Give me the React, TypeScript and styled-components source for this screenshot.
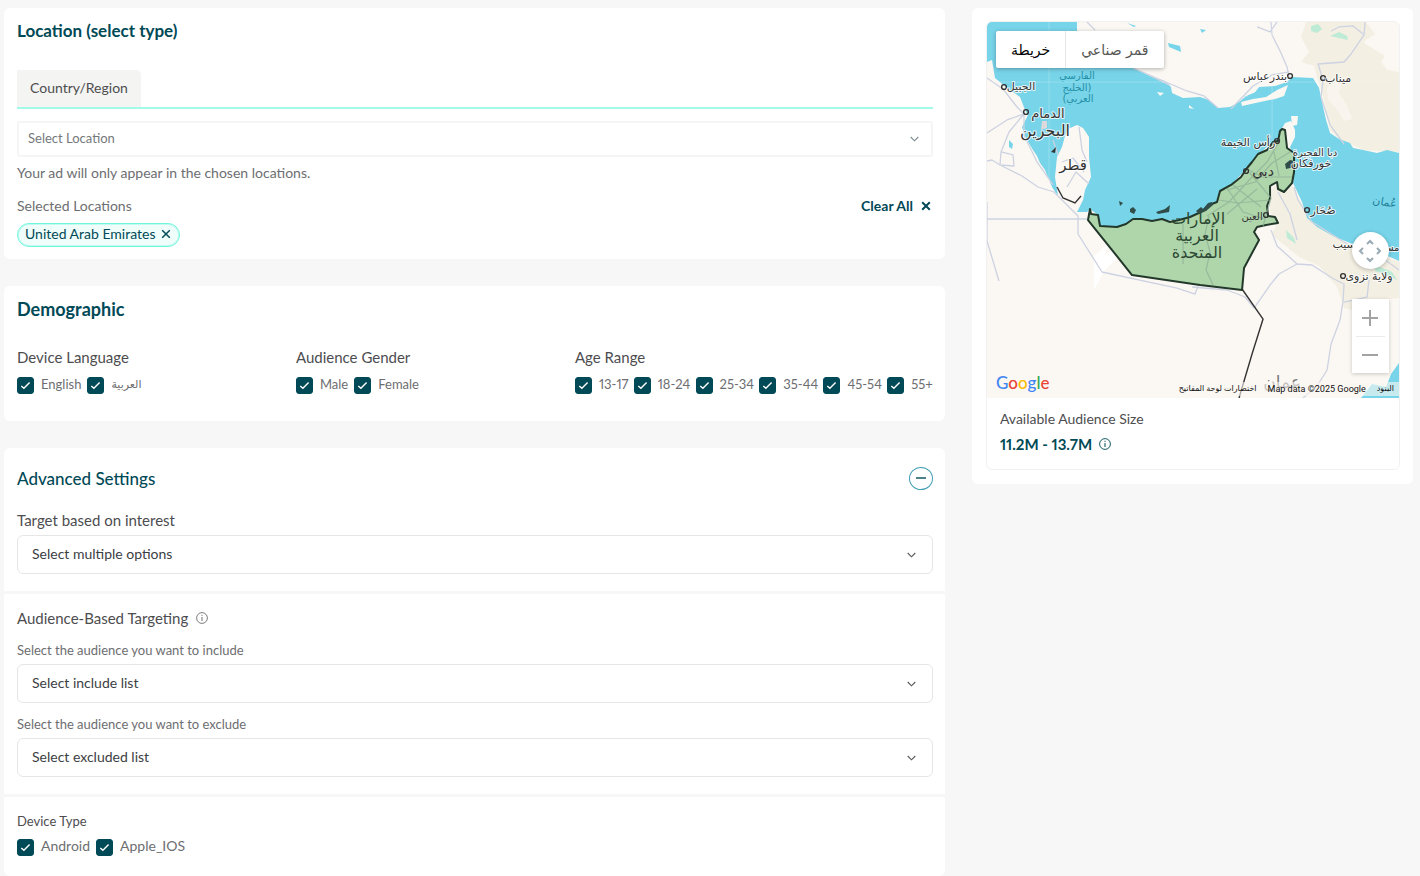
import React, { useState } from "react";
import styled, { createGlobalStyle } from "styled-components";

const GlobalStyle = createGlobalStyle`
  * { box-sizing: border-box; }
  body {
    margin: 0;
    background: #f7f7f7;
    color: #4d4d4f;
    font-family: Lato, "DejaVu Sans", sans-serif;
    font-size: 14px;
    line-height: 20px;
    font-variant-numeric: proportional-nums;
  }
  button, select { font: inherit; color: inherit; }
  h2, h3, p { margin: 0; }
`;

const teal = "#004956";

const Page = styled.div`
  display: grid;
  grid-template-columns: minmax(0, 32fr) minmax(0, 15fr);
  align-items: start;
  gap: 27px;
  padding: 8px 7px 0 4px;
`;

const Column = styled.main`
  display: flex;
  flex-direction: column;
  gap: 27px;
`;

const Card = styled.section`
  background: #fff;
  border-radius: 6px;
`;

const Section = styled.div<{ $top?: number; $bottom?: number }>`
  display: flex;
  flex-direction: column;
  padding: ${(p) => p.$top ?? 13}px 12px ${(p) => p.$bottom ?? 12}px 13px;
  & + & { border-top: 3px solid #f7f7f7; }
`;

const Title = styled.h2<{ $weight?: number; $size?: number }>`
  color: ${teal};
  font-size: ${(p) => p.$size ?? 17}px;
  line-height: 20px;
  font-weight: ${(p) => p.$weight ?? 700};
`;

const TabBar = styled.div`
  display: flex;
  margin-top: 29px;
  border-bottom: 2px solid #a2fbe9;
`;

const Tab = styled.button`
  height: 37px;
  padding: 0 13px 2px;
  border: 0;
  border-radius: 0 5px 0 0;
  background: #f4f4f2;
`;

const Field = styled.div`
  position: relative;
  display: flex;
  svg {
    position: absolute;
    right: 17px;
    top: 50%;
    transform: translateY(-50%);
    pointer-events: none;
  }
`;

const LocationField = styled.div`
  margin: 12px 0 6px;
  svg { right: 14px; }
`;

const Select = styled.select<{ $muted?: boolean }>`
  appearance: none;
  width: 100%;
  height: ${(p) => (p.$muted ? 36 : 39)}px;
  padding: 0 ${(p) => (p.$muted ? 9 : 14)}px 2px;
  border: ${(p) => (p.$muted ? "2px solid #f5f5f5" : "1px solid #e6e6e6")};
  border-radius: ${(p) => (p.$muted ? 3 : 6)}px;
  background: #fff;
  color: ${(p) => (p.$muted ? "#75787b" : "#3c4043")};
  font-size: ${(p) => (p.$muted ? 13 : 14)}px;
`;

const Note = styled.p`
  color: #6d6e71;
`;

const Row = styled.div<{ $gap?: number; $between?: boolean }>`
  display: flex;
  align-items: center;
  gap: ${(p) => p.$gap ?? 0}px;
  justify-content: ${(p) => (p.$between ? "space-between" : "flex-start")};
`;

const SelectedRow = styled(Row)`
  margin-top: 13px;
`;

const ClearButton = styled.button`
  display: flex;
  align-items: center;
  gap: 8px;
  padding: 0 2px;
  border: 0;
  background: none;
  color: ${teal};
  font-weight: 700;
`;

const Chip = styled.span`
  display: inline-flex;
  align-items: center;
  align-self: flex-start;
  gap: 6px;
  height: 24px;
  margin-top: 7px;
  padding: 0 8px 2px 7px;
  border: 1px solid #6ff5dc;
  border-radius: 12px;
  background: #effefb;
  color: ${teal};
  box-shadow: inset 0 0 0 1px #c4fbf0;
`;

const IconButton = styled.button`
  display: flex;
  padding: 0;
  border: 0;
  background: none;
`;

const Groups = styled.div`
  display: grid;
  grid-template-columns: 279fr 279fr 358fr;
  margin-top: 28px;
`;

const Fieldset = styled.fieldset`
  min-width: 0;
  margin: 0;
  padding: 0;
  border: 0;
`;

const Legend = styled.legend<{ $small?: boolean }>`
  padding: 0;
  margin-bottom: ${(p) => (p.$small ? 7 : 9)}px;
  font-size: ${(p) => (p.$small ? 13 : 15)}px;
`;

const Checks = styled.div<{ $spread?: boolean }>`
  display: flex;
  gap: ${(p) => (p.$spread ? 4 : 6)}px;
  justify-content: ${(p) => (p.$spread ? "space-between" : "flex-start")};
`;

const CheckLabel = styled.label<{ $small?: boolean }>`
  display: inline-flex;
  align-items: center;
  gap: 7px;
  height: 18px;
  color: #6d6e71;
  font-size: ${(p) => (p.$small ? 13 : 14)}px;
  white-space: nowrap;
`;

const CheckText = styled.span`
  padding-bottom: 2px;
  line-height: 16px;
  &:lang(ar) { font-size: 11px; }
`;

const CheckBox = styled.span`
  display: grid;
  width: 17px;
  height: 17px;
  input, svg { grid-area: 1 / 1; }
  input {
    appearance: none;
    width: 17px;
    height: 17px;
    margin: 0;
    border: 1px solid ${teal};
    border-radius: 3px;
  }
  input:checked { background: ${teal}; }
  svg { pointer-events: none; place-self: center; }
`;

const Toggle = styled.button`
  display: flex;
  align-items: center;
  justify-content: center;
  width: 24px;
  height: 23px;
  padding: 0 0 2px;
  border: 1px solid #3f9db2;
  border-radius: 50%;
  background: #fff;
`;

const SubTitle = styled.h3`
  font-size: 15px;
  line-height: 20px;
  font-weight: 400;
`;

const FieldLabel = styled.label<{ $top?: number; $bottom?: number }>`
  margin-top: ${(p) => p.$top ?? 0}px;
  margin-bottom: ${(p) => p.$bottom ?? 4}px;
  color: #6d6e71;
  font-size: 13px;
`;

const InterestLabel = styled(FieldLabel)`
  color: #4d4d4f;
  font-size: 15px;
`;

const Aside = styled.aside`
  padding: 13px 13px 14px 14px;
  border-radius: 6px;
  background: #fff;
`;

const MapCard = styled.div`
  overflow: hidden;
  border: 1px solid #f1f1f1;
  border-radius: 6px;
`;

const MapArea = styled.div`
  position: relative;
  height: 376px;
  background: #fbf8f3;
  > svg { display: block; width: 100%; height: 100%; }
`;

const MapTypes = styled.div`
  position: absolute;
  top: 9px;
  left: 9px;
  display: flex;
  height: 37px;
  background: #fff;
  border-radius: 2px;
  box-shadow: 0 1px 4px rgba(0, 0, 0, 0.3);
`;

const MapType = styled.button<{ $active?: boolean }>`
  padding: 0 15px;
  border: 0;
  border-right: ${(p) => (p.$active ? "1px solid #e6e6e6" : "0")};
  background: none;
  color: ${(p) => (p.$active ? "#000" : "#565656")};
  font-family: "DejaVu Sans", sans-serif;
  font-size: 14px;
`;

const PanButton = styled.button`
  position: absolute;
  top: 210px;
  right: 10px;
  display: grid;
  place-items: center;
  width: 37px;
  height: 37px;
  padding: 0;
  border: 0;
  border-radius: 50%;
  background: #fff;
  box-shadow: 0 1px 4px rgba(0, 0, 0, 0.25);
`;

const Zoom = styled.div`
  position: absolute;
  right: 10px;
  top: 277px;
  display: flex;
  flex-direction: column;
  align-items: center;
  width: 37px;
  background: #fff;
  box-shadow: 0 1px 4px rgba(0, 0, 0, 0.2);
`;

const ZoomButton = styled.button`
  display: grid;
  place-items: center;
  width: 29px;
  height: 37px;
  padding: 0;
  border: 0;
  background: none;
  & + & { border-top: 1px solid #ececec; }
`;

const Logo = styled.a`
  position: absolute;
  left: 9px;
  bottom: 4px;
  font-family: Lato, sans-serif;
  font-size: 17px;
  font-weight: 500;
  line-height: 22px;
  text-decoration: none;
`;

const Letter = styled.span<{ $c: string }>`
  color: ${(p) => p.$c};
`;

const Attribution = styled.div`
  position: absolute;
  right: 0;
  bottom: 2px;
  display: flex;
  gap: 11px;
  padding: 0 5px;
  background: rgba(251, 248, 243, 0.6);
  color: #111;
  font-family: Roboto, "DejaVu Sans", sans-serif;
  font-size: 9px;
  line-height: 14px;
  white-space: nowrap;
  a { color: inherit; text-decoration: none; font-size: 8px; }
`;

const Audience = styled.div`
  display: flex;
  flex-direction: column;
  gap: 5px;
  padding: 11px 12px 15px 13px;
`;

const Size = styled.strong`
  color: ${teal};
  font-size: 15px;
`;

function Chevron({ color = "#55575a" }: { color?: string }) {
  return (
    <svg width="9" height="6" viewBox="0 0 9 6" fill="none" stroke={color} strokeWidth="1.1">
      <path d="M.7 1l3.8 3.8L8.3 1" />
    </svg>
  );
}

function Cross({ width = 1.5 }: { width?: number }) {
  return (
    <svg width="10" height="10" viewBox="0 0 10 10" stroke={teal} strokeWidth={width}>
      <path d="M1.2 1.2l7.6 7.6M8.8 1.2L1.2 8.8" />
    </svg>
  );
}

function Info({ color }: { color: string }) {
  return (
    <svg width="12" height="12" viewBox="0 0 12 12" fill="none" stroke={color}>
      <circle cx="6" cy="6" r="5.4" strokeWidth=".9" />
      <path d="M6 5v4M6 2.8v1.1" strokeWidth="1" />
    </svg>
  );
}

function Check({ label, small }: { label: string; small?: boolean }) {
  const [on, setOn] = useState(true);
  return (
    <CheckLabel $small={small}>
      <CheckBox>
        <input type="checkbox" checked={on} onChange={() => setOn(!on)} />
        <svg width="11" height="9" viewBox="0 0 11 9" fill="none" stroke="#fff" strokeWidth="1.4">
          <path d="M1.3 4.9l2.6 2.4L9.6 1.4" />
        </svg>
      </CheckBox>
      <CheckText lang={label === "العربية" ? "ar" : undefined}>{label}</CheckText>
    </CheckLabel>
  );
}

type CheckGroupProps = { title: string; items: string[]; spread?: boolean; compact?: boolean };

function CheckGroup({ title, items, spread, compact }: CheckGroupProps) {
  return (
    <Fieldset>
      <Legend $small={compact}>{title}</Legend>
      <Checks $spread={spread}>
        {items.map((i) => <Check key={i} label={i} small={!compact} />)}
      </Checks>
    </Fieldset>
  );
}

function Dropdown({ id, text, muted, label }: { id: string; text: string; muted?: boolean; label?: string }) {
  return (
    <Field>
      <Select id={id} $muted={muted} aria-label={label}>
        <option>{text}</option>
      </Select>
      <Chevron color={muted ? "#7b8a90" : undefined} />
    </Field>
  );
}

const uae =
  "M103 187L101 198L145 253L213 263L255 268L257 246L272 218L267 210L270 205L279 203L291 201L288 195L281 194L280 184L283 176L283 164L290 160L291 167L297 170L305 161L307 150L307 131L300 126L298 108L295 107L293 109L291 119L286 120L280 128L271 132L265 140L260 146L254 155L244 163L233 169L230 180L222 183L214 190L203 195L192 198L183 200L175 197L165 199L155 197L146 197L139 202L130 205L113 204L111 193L104 192Z";

const places: [number, number, string, number, string?][] = [
  [34, 68, "الجبيل", 11],
  [61, 96, "الدمام", 13],
  [58, 114, "البحرين", 16],
  [86, 148, "قطر", 15],
  [278, 58, "بندرعباس", 11],
  [351, 60, "ميناب", 11],
  [261, 124, "رأس الخيمة", 11],
  [328, 134, "دبا الفجيرة", 10],
  [324, 145, "خورفكان", 11],
  [276, 154, "دبي", 14],
  [265, 198, "العين", 10],
  [336, 192, "صُحَار", 11],
  [357, 226, "سيب", 11],
  [398, 229, "مسقط", 10],
  [382, 258, "ولاية نزوى", 11],
  [295, 366, "عمان", 17, "#77777a"],
];

function GulfMap() {
  return (
    <svg viewBox="0 0 412 376" preserveAspectRatio="xMidYMid slice" role="img" aria-label="خريطة">
      <rect width="412" height="376" fill="#fbf8f3" />
      <g fill="#f3efe2">
        <path d="M319 0H412V130L376 128L351 116L343 108L339 88L334 66L330 55L327 44L314 40L322 30L314 15Z" />
        <path d="M306 165L318 190L332 206L363 222L412 240V276L380 280L372 290L357 286L350 265L332 244L312 235L296 222L284 212L291 201L283 190V168L291 162Z" />
      </g>
      <path d="M379 0L412 0V50L400 48L394 40L398 34L385 26L376 20L388 12Z" fill="#fbf8f3" />
      <path d="M340 66l8-6 6 3-2 8 8 12 5 14-8 2-6-10-10-12z" fill="#fbf8f3" opacity=".7" />
      <g fill="#bdebd6">
        <path d="M324 4l7-2 4 5-5 4-6-2zM343 14l9-4 8 4 1 4-9-2zM299 208l8 8 2 6-9-6zM388 243l17 7 5 8-8-4-14-5z" />
      </g>
      <path
        fill="#78d4e9"
        d="M0 0H90V22L124 35L146 46L165 55L178 59L184 65L185 71L196 76L213 75L222 78L231 86L243 85L252 80L258 75L266 73L272 65L288 64L300 60L305 55L326 56L332 66L336 85L339 98L343 111L352 117L363 121L366 126L376 128L390 131L400 128L412 131V239L403 235L384 228L363 221L346 214L330 205L320 196L315 180L306 161L307 138L303 125L308 115V108L304 99L298 101L294 108L291 119L283 122L271 133L260 146L246 161L233 171L230 181L210 193L192 198L165 199L146 197L139 202L130 205L113 204L111 193L103 187L100 190H90L96 178L98 168L104 155L102 135V115L96 106L90 103L81 107L78 114L75 125L70 135L68 155L71 174L65 165L58 148L53 141L50 134L46 128L38 115L35 105L41 93L38 88L33 75L20 66L8 56L5 38L0 40Z"
      />
      <g fill="#fbf8f3">
        <path d="M254 80L266 77L279 75L290 68L301 63L297 74L288 77L273 80L255 84Z" />
        <path d="M304 94l7 0-1 9-5 1zM170 70l7 1-4 3zM202 83l5 4-5-1z" />
        <path d="M55 99l5 0 0 7-6 2z" fill="#ddd9dc" />
      </g>
      <path d="M257 75L278 66L285 71L273 73Z" fill="#78d4e9" />
      <g fill="#78d4e9">
        <path d="M412 341L404 352L399 365L385 362L374 376H412ZM22 118l4 4-1 5-3-2zM181 21l12 3 1 6-12-5zM140 1l9 3-2 1zM213 7l6 1-4 3z" />
      </g>
      <path d="M107 234L121 222L118 234L134 218L138 229L118 248L107 268Z" fill="#fff" />
      <g fill="none" stroke="#cdd2e2" strokeWidth="1.3" strokeLinejoin="round">
        <path d="M0 56L16 67L30 85L37 92L20 98L0 111M37 92L22 110L14 130L26 133L27 144L13 143L5 138L0 139M37 92V113L50 140L66 163M14 130L13 143L35 154L51 165L67 170L91 194V212L115 250L190 266L208 272L211 264M0 197H100M0 180V219L12 259" />
        <path d="M75 140L86 136L97 150M80 165L89 150L102 162M92 105L95 128L100 140M66 118L71 133M100 0L108 8M290 0L283 10L270 5M284 0L285 13L294 31L300 45L302 55M302 50L285 53L266 64L244 87M378 0L377 13L364 32L357 40L331 42L336 58L334 75L343 103L357 122M344 9L352 5L366 4L376 12" />
        <path d="M146 46L174 58L200 69L217 74L231 86M160 52L182 63" />
        <path d="M307 165L311 178L325 200L338 208L360 222L371 226L390 232L412 248M284 208L290 224L299 232L310 242L325 243L345 256L357 262L356 279L353 298L344 322L340 348L330 364L316 376M310 242L292 252L283 263L267 286M205 265L240 268L258 275L267 286M357 280L380 275L382 258M291 170L303 192L310 218" />
      </g>
      <path d="M0 60H412M62 0V376M285 0V376M0 301H412" stroke="#fff" strokeOpacity=".22" fill="none" />
      <path d="M255 267L276 297L265 332L252 376M70 165L76 176L88 181L94 174" fill="none" stroke="#343434" strokeWidth="1.4" />
      <path d="M64 130l5-5-1 6z" fill="#353535" />
      <path d={uae} fill="#afd5aa" stroke="#22382a" strokeWidth="2" strokeLinejoin="round" />
      <g fill="none" stroke="#8bae96" strokeWidth="1.2" opacity=".7" strokeLinejoin="round">
        <path d="M293 118L280 140L265 155L242 180L220 194M303 130L285 141L268 160L240 168M260 147L275 155L305 155M262 150L284 176L276 204M240 166L256 190L278 197M232 178L250 181L283 178M222 194L218 212L223 230L219 248L226 263M246 163L274 185M286 126L292 154M240 192L270 167M196 202V242" />
      </g>
      <g fill="#314d4a">
        <path d="M132 179l4 2-3 3zM143 187l3-2 3 3-2 4-4-2zM169 190l9-3 5-4-1 7-11 2zM209 189l5-4 2 2 5-6 4-1 1 3-7 6-7 3zM298 142l5-4 4 1v6l-8 2z" />
      </g>
      <g fill="none" stroke="#333" strokeWidth="1.4">
        {[[17, 65], [39, 90], [303, 54], [336, 56], [259, 149], [279, 193], [320, 188], [356, 254], [290, 119]].map(([x, y]) => (
          <circle key={`${x}-${y}`} cx={x} cy={y} r="2.4" />
        ))}
      </g>
      <g fontFamily="'DejaVu Sans', sans-serif" textAnchor="middle">
        <g fill="#2390a8" fontSize="10">
          <text x="90" y="57">الفارسي</text>
          <text x="90" y="69" direction="rtl">(الخليج</text>
          <text x="91" y="80" direction="rtl">العربي)</text>
        </g>
        <text x="397" y="184" fill="#207f96" fontSize="11" transform="rotate(10 399 184)">عُمان</text>
        <g stroke="#fff" strokeWidth="2" paintOrder="stroke" strokeLinejoin="round">
          {places.map(([x, y, name, size, fill]) => (
            <text key={name} x={x} y={y} fontSize={size} fill={fill ?? "#333"} strokeOpacity={fill || name === "دبي" || name === "العين" ? 0 : 0.8}>{name}</text>
          ))}
        </g>
        <g fill="#2c4934" fontSize="16">
          <text x="211" y="202">الإمارات</text>
          <text x="210" y="219">العربية</text>
          <text x="210" y="236">المتحدة</text>
        </g>
      </g>
    </svg>
  );
}

const logo: [string, string][] = [
  ["G", "#4285f4"], ["o", "#ea4335"], ["o", "#fbbc05"], ["g", "#4285f4"], ["l", "#34a853"], ["e", "#ea4335"],
];

export default function App() {
  return (
    <>
      <GlobalStyle />
      <Page>
        <Column>
          <Card>
            <Section>
              <Title>Location (select type)</Title>
              <TabBar>
                <Tab type="button">Country/Region</Tab>
              </TabBar>
              <LocationField>
                <Dropdown id="location" text="Select Location" muted label="Select Location" />
              </LocationField>
              <Note>Your ad will only appear in the chosen locations.</Note>
              <SelectedRow $between>
                <Note>Selected Locations</Note>
                <ClearButton type="button">Clear All <Cross width={2} /></ClearButton>
              </SelectedRow>
              <Chip>
                United Arab Emirates
                <IconButton type="button" aria-label="Remove"><Cross /></IconButton>
              </Chip>
            </Section>
          </Card>

          <Card>
            <Section $bottom={27}>
              <Title $size={18}>Demographic</Title>
              <Groups>
                <CheckGroup title="Device Language" items={["English", "العربية"]} />
                <CheckGroup title="Audience Gender" items={["Male", "Female"]} />
                <CheckGroup title="Age Range" items={["13-17", "18-24", "25-34", "35-44", "45-54", "55+"]} spread />
              </Groups>
            </Section>
          </Card>

          <Card>
            <Section $top={19} $bottom={17}>
              <Row $between>
                <Title $weight={500}>Advanced Settings</Title>
                <Toggle type="button" aria-label="Collapse">
                  <svg width="10" height="2" viewBox="0 0 10 2"><path d="M0 1h10" stroke={teal} strokeWidth="1.4" /></svg>
                </Toggle>
              </Row>
              <InterestLabel htmlFor="interest" $top={20} $bottom={5}>Target based on interest</InterestLabel>
              <Dropdown id="interest" text="Select multiple options" />
            </Section>
            <Section $top={14} $bottom={17}>
              <Row $gap={8}>
                <SubTitle>Audience-Based Targeting</SubTitle>
                <Info color="#6d6e71" />
              </Row>
              <FieldLabel htmlFor="include" $top={12}>Select the audience you want to include</FieldLabel>
              <Dropdown id="include" text="Select include list" />
              <FieldLabel htmlFor="exclude" $top={11}>Select the audience you want to exclude</FieldLabel>
              <Dropdown id="exclude" text="Select excluded list" />
            </Section>
            <Section $top={14} $bottom={20}>
              <CheckGroup title="Device Type" items={["Android", "Apple_IOS"]} compact />
            </Section>
          </Card>
        </Column>

        <Aside>
          <MapCard>
            <MapArea>
              <GulfMap />
              <MapTypes>
                <MapType type="button" $active>خريطة</MapType>
                <MapType type="button">قمر صناعي</MapType>
              </MapTypes>
              <PanButton type="button" aria-label="Pan">
                <svg width="24" height="24" viewBox="0 0 24 24" fill="none" stroke="#9aabb5" strokeWidth="2">
                  <path d="M9 5l3-3 3 3M9 19l3 3 3-3M5 9l-3 3 3 3M19 9l3 3-3 3" />
                </svg>
              </PanButton>
              <Zoom>
                <ZoomButton type="button" aria-label="Zoom in">
                  <svg width="16" height="16" viewBox="0 0 16 16" stroke="#a3a3a3" strokeWidth="2"><path d="M0 8h16M8 0v16" /></svg>
                </ZoomButton>
                <ZoomButton type="button" aria-label="Zoom out">
                  <svg width="16" height="4" viewBox="0 0 16 4" stroke="#a3a3a3" strokeWidth="2"><path d="M0 2h16" /></svg>
                </ZoomButton>
              </Zoom>
              <Logo href="#map" aria-label="Google">
                {logo.map(([ch, c], i) => <Letter key={i} $c={c}>{ch}</Letter>)}
              </Logo>
              <Attribution>
                <a href="#shortcuts">اختصارات لوحة المفاتيح</a>
                <span>Map data ©2025 Google</span>
                <a href="#terms">البنود</a>
              </Attribution>
            </MapArea>
            <Audience>
              <p>Available Audience Size</p>
              <Row $gap={7}>
                <Size>11.2M - 13.7M</Size>
                <Info color={teal} />
              </Row>
            </Audience>
          </MapCard>
        </Aside>
      </Page>
    </>
  );
}
